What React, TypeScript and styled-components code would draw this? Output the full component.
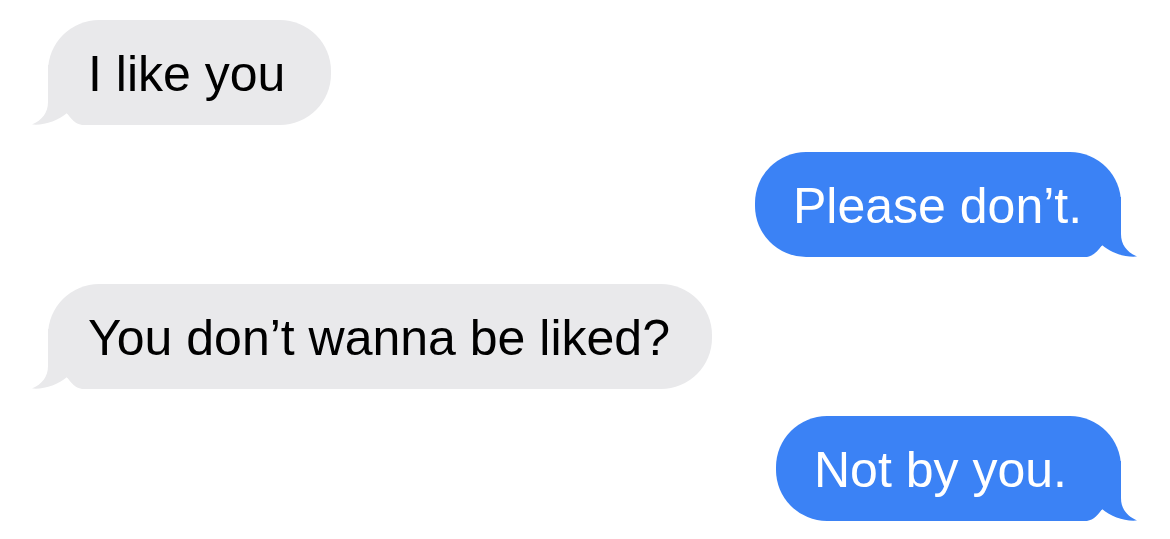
import React from "react";
import styled, { createGlobalStyle } from "styled-components";

const GlobalStyle = createGlobalStyle`
  html, body {
    margin: 0;
    padding: 0;
    background: #ffffff;
  }
  body {
    font-family: "Liberation Sans", Arial, sans-serif;
  }
`;

const Thread = styled.div`
  width: 1170px;
  height: 539px;
  box-sizing: border-box;
  padding: 20px 49px 0 48px;
  display: flex;
  flex-direction: column;
  gap: 27px;
  background: #ffffff;
  overflow: hidden;
`;

const Bubble = styled.div<{ $sent: boolean; $w: number }>`
  position: relative;
  align-self: ${(p) => (p.$sent ? "flex-end" : "flex-start")};
  box-sizing: border-box;
  width: ${(p) => p.$w}px;
  height: 105px;
  padding: 24px 0 21px ${(p) => (p.$sent ? 38 : 40)}px;
  border-radius: 51px;
  background: ${(p) => (p.$sent ? "#3b82f5" : "#e9e9eb")};
  color: ${(p) => (p.$sent ? "#ffffff" : "#000000")};
  font-size: 50px;
  line-height: 60px;
  white-space: nowrap;
`;

const Text = styled.span`
  position: relative;
`;

const Tail = styled.svg<{ $sent: boolean }>`
  position: absolute;
  bottom: 0;
  width: 76px;
  height: 60px;
  ${(p) =>
    p.$sent
      ? "right: -16px; transform: scaleX(-1);"
      : "left: -16px;"}
  fill: ${(p) => (p.$sent ? "#3b82f5" : "#e9e9eb")};
`;

type Msg = { text: string; sent: boolean; w: number };

const messages: Msg[] = [
  { text: "I like you", sent: false, w: 283 },
  { text: "Please don\u2019t.", sent: true, w: 366 },
  { text: "You don\u2019t wanna be liked?", sent: false, w: 664 },
  { text: "Not by you.", sent: true, w: 345 },
];

const TailShape: React.FC<{ sent: boolean }> = ({ sent }) => (
  <Tail $sent={sent} viewBox="0 0 76 60" aria-hidden="true">
    <path d="M16 0 L16 37 C16 48 10 55 0 59.5 C12 60.6 26 56 35 48 C39 54 43 58.6 50 60 L76 60 L76 0 Z" />
  </Tail>
);

export default function App() {
  return (
    <>
      <GlobalStyle />
      <Thread>
        {messages.map((m, i) => (
          <Bubble key={i} $sent={m.sent} $w={m.w}>
            <TailShape sent={m.sent} />
            <Text>{m.text}</Text>
          </Bubble>
        ))}
      </Thread>
    </>
  );
}
